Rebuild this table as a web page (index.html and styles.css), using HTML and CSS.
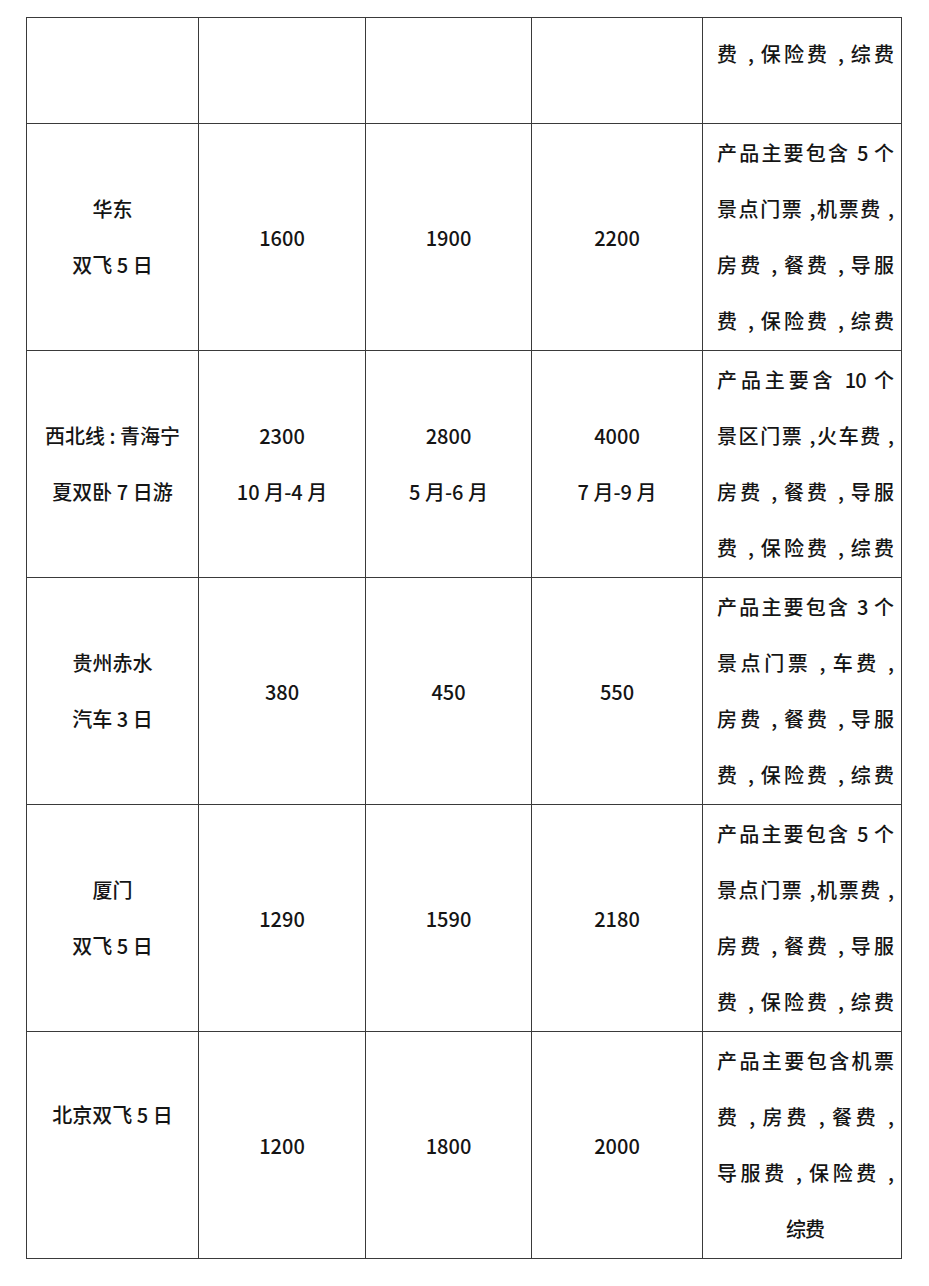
FILE: index.html
```html
<!DOCTYPE html>
<html lang="zh">
<head>
<meta charset="utf-8">
<link rel="stylesheet" href="styles.css">
</head>
<body>
<table class="price">
  <colgroup>
    <col class="c1"><col class="c2"><col class="c3"><col class="c4"><col class="c5">
  </colgroup>
  <tr class="r-first">
    <td></td><td></td><td></td><td></td>
    <td class="desc top"><div class="ln">费 , 保险费 , 综费</div></td>
  </tr>
  <tr class="r">
    <td class="name"><div>华东</div><div>双飞 5 日</div></td>
    <td class="num">1600</td>
    <td class="num">1900</td>
    <td class="num">2200</td>
    <td class="desc">
      <div class="ln">产品主要包含 5 个</div>
      <div class="ln">景点门票 ,机票费 ,</div>
      <div class="ln">房费 , 餐费 , 导服</div>
      <div class="ln">费 , 保险费 , 综费</div>
    </td>
  </tr>
  <tr class="r">
    <td class="name"><div>西北线 : 青海宁</div><div>夏双卧 7 日游</div></td>
    <td class="num"><div>2300</div><div>10 月-4 月</div></td>
    <td class="num"><div>2800</div><div>5 月-6 月</div></td>
    <td class="num"><div>4000</div><div>7 月-9 月</div></td>
    <td class="desc">
      <div class="ln">产品主要含 10 个</div>
      <div class="ln">景区门票 ,火车费 ,</div>
      <div class="ln">房费 , 餐费 , 导服</div>
      <div class="ln">费 , 保险费 , 综费</div>
    </td>
  </tr>
  <tr class="r">
    <td class="name"><div>贵州赤水</div><div>汽车 3 日</div></td>
    <td class="num">380</td>
    <td class="num">450</td>
    <td class="num">550</td>
    <td class="desc">
      <div class="ln">产品主要包含 3 个</div>
      <div class="ln">景点门票 , 车费 ,</div>
      <div class="ln">房费 , 餐费 , 导服</div>
      <div class="ln">费 , 保险费 , 综费</div>
    </td>
  </tr>
  <tr class="r">
    <td class="name"><div>厦门</div><div>双飞 5 日</div></td>
    <td class="num">1290</td>
    <td class="num">1590</td>
    <td class="num">2180</td>
    <td class="desc">
      <div class="ln">产品主要包含 5 个</div>
      <div class="ln">景点门票 ,机票费 ,</div>
      <div class="ln">房费 , 餐费 , 导服</div>
      <div class="ln">费 , 保险费 , 综费</div>
    </td>
  </tr>
  <tr class="r">
    <td class="name raised"><div>北京双飞 5 日</div></td>
    <td class="num">1200</td>
    <td class="num">1800</td>
    <td class="num">2000</td>
    <td class="desc">
      <div class="ln">产品主要包含机票</div>
      <div class="ln">费 , 房费 , 餐费 ,</div>
      <div class="ln">导服费 , 保险费 ,</div>
      <div class="ln last">综费</div>
    </td>
  </tr>
</table>
</body>
</html>
```

FILE: styles.css
```css
html, body {
  margin: 0;
  padding: 0;
  background: #ffffff;
}

body {
  font-family: "Noto Sans CJK SC", "Noto Sans", sans-serif;
  font-size: 20px;
  font-weight: 500;
  color: #151515;
}

.price {
  margin: 17px 0 0 26px;
  border-collapse: collapse;
  table-layout: fixed;
  width: 875px;
}

.c1 { width: 172px; }
.c2 { width: 167px; }
.c3 { width: 166px; }
.c4 { width: 171px; }
.c5 { width: 199px; }

.price td {
  border: 1.5px solid #3a3a3a;
  padding: 0;
  text-align: center;
  vertical-align: middle;
}

.r-first { height: 106px; }
.r { height: 227px; }

.name div,
.num div {
  line-height: 56px;
}

.name.raised {
  padding-bottom: 60px !important;
}

.desc {
  padding: 0 8px 0 14px !important;
}

.desc.top {
  vertical-align: top;
  padding-top: 8px !important;
}

.ln {
  line-height: 56px;
  text-align: justify;
  text-align-last: justify;
  white-space: nowrap;
  letter-spacing: -1px;
}

.ln.last {
  text-align: center;
  text-align-last: center;
}
```
